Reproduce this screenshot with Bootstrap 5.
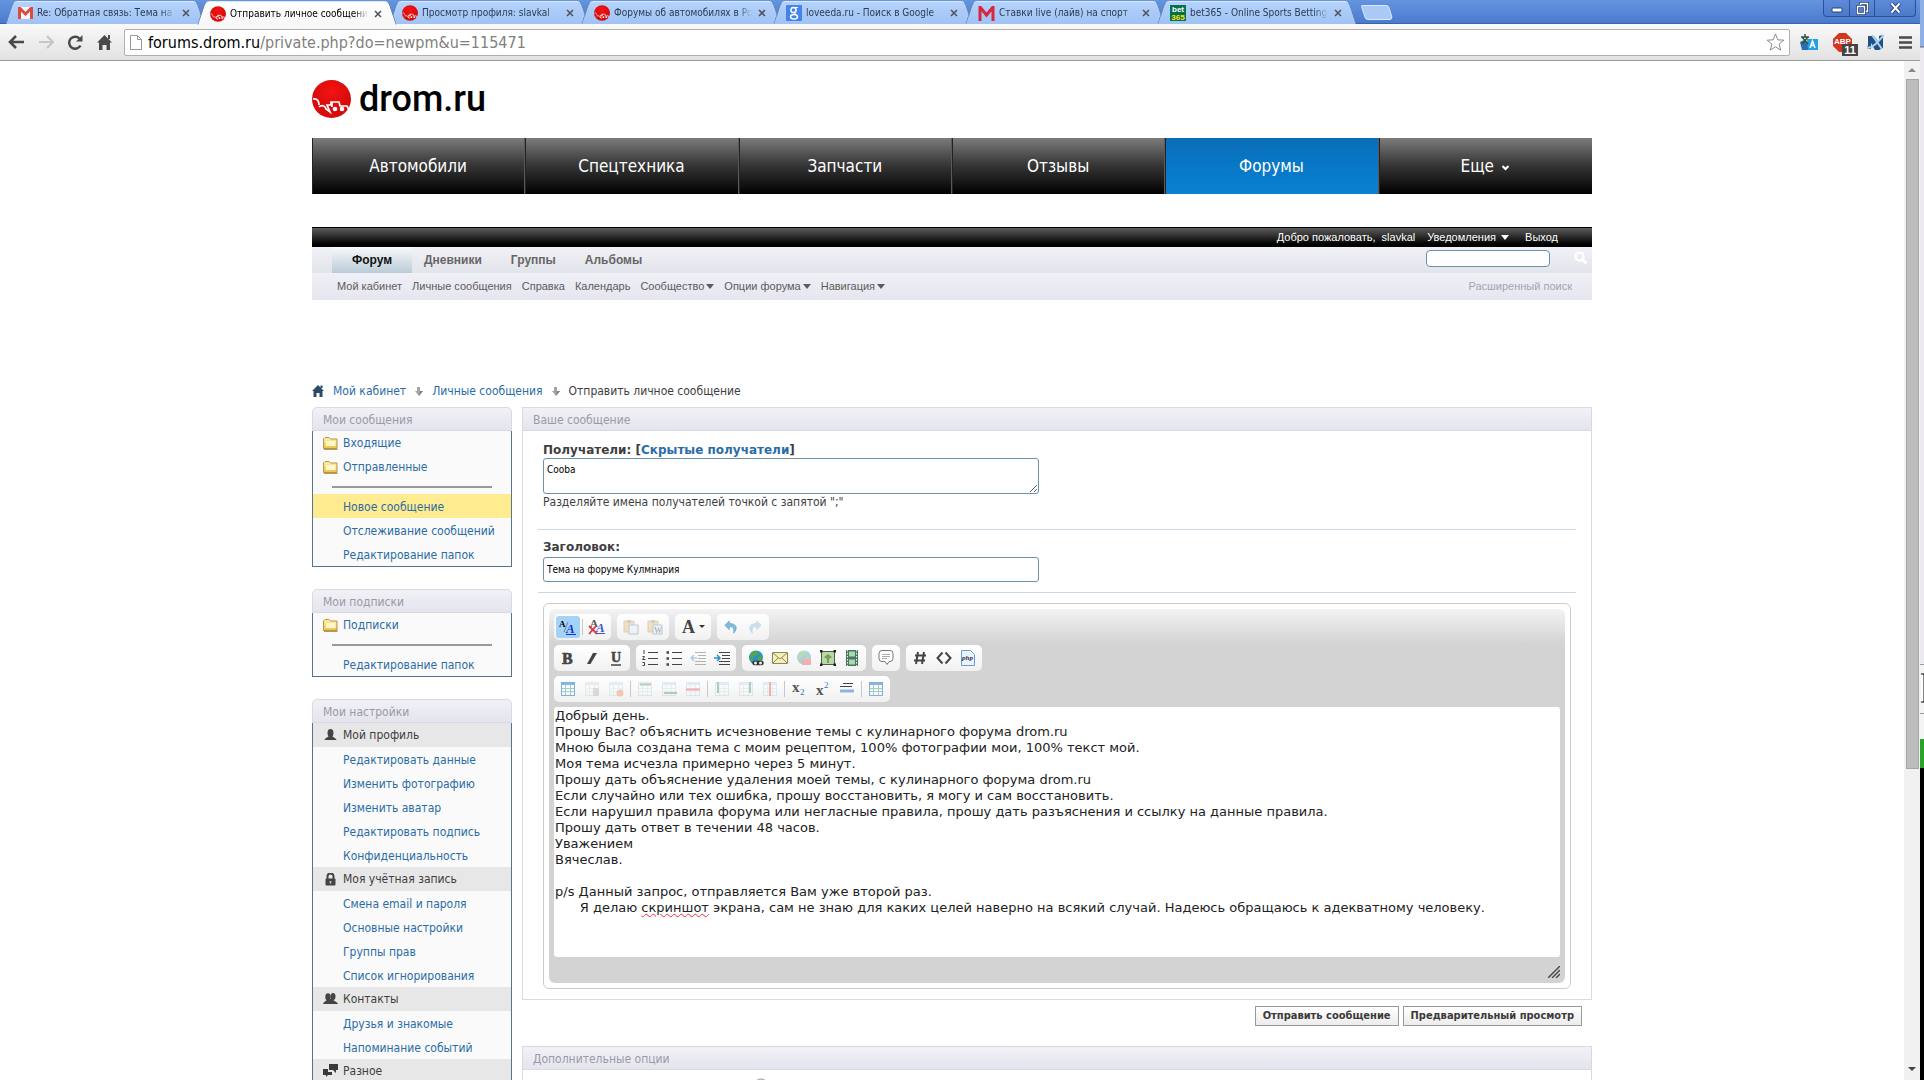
<!DOCTYPE html>
<html lang="ru">
<head>
<meta charset="utf-8">
<meta name="viewport" content="width=device-width, initial-scale=1">
<title>Отправить личное сообщение</title>
<link href="https://cdn.jsdelivr.net/npm/bootstrap@5.3.0/dist/css/bootstrap.min.css" rel="stylesheet">
<style>
:root{--tahoma:"DejaVu Sans Condensed","DejaVu Sans",sans-serif;--verdana:"DejaVu Sans",sans-serif;--arial:"Liberation Sans",sans-serif}
body{font:12px/16px var(--tahoma);color:#3e3e3e;background:#fff}
a{color:#2a6ca6;text-decoration:none}
button{border:0;background:none;padding:0;color:inherit}
svg{display:block;flex:none}
/* browser frame */
.tabstrip{height:24px;padding-left:9px;background:linear-gradient(#6595df,#4a7ace);border-bottom:1px solid #3d63a5}
.btab{position:relative;isolation:isolate;width:192px;height:24px;padding:2px 11px 0 9px;color:#2c3a52;font-size:10px}
.btab::before,.btab::after{content:"";position:absolute;z-index:-1;top:1px;bottom:0;width:60%;background:linear-gradient(#b4d2fb,#9fc3f4);border-top:1px solid #dbe9fd}
.btab::before{left:0;transform:skewX(-18deg);border-left:1px solid #6283b8;border-top-left-radius:5px}
.btab::after{right:0;transform:skewX(18deg);border-right:1px solid #6283b8;border-top-right-radius:5px}
.btab.is-open{z-index:2;height:25px;color:#000}
.btab.is-open::before,.btab.is-open::after{background:linear-gradient(#fff,#f7f7f7)}
.btab a{color:inherit;width:138px;overflow:hidden;white-space:nowrap;-webkit-mask-image:linear-gradient(90deg,#000 90%,transparent);mask-image:linear-gradient(90deg,#000 90%,transparent)}
.newtab{width:28px;height:15px;margin:5px 0 0 10px;background:#abc9f5;border:1px solid #dbe9fd;border-radius:2px 3px 4px 3px;transform:skewX(18deg)}
.winbtns{height:17px;margin-right:4px;border:1px solid #2d4f93;border-top:0;border-radius:0 0 4px 4px;background:linear-gradient(#5d8bd9,#4c79c9)}
.winbtns button{width:25px;height:16px;display:grid;place-items:center}
.winbtns button+button{border-left:1px solid #2d4f93}
.winbtns button:last-child{width:41px}
.toolbar{height:37px;padding:0 8px;background:linear-gradient(#f9f9f9,#e2e2e2);border-bottom:1px solid #9b9b9b}
.navbtns{gap:14px}
.urlbox{height:27px;margin:0 6px 0 12px;padding:0 4px 0 5px;border:1px solid #b3aea8;border-radius:2px;background:#fff}
.urlbox svg:first-child{margin-right:6px}
.urlbox span{font-size:16px;line-height:24px;padding-top:2px;color:#808080}
.urlbox b{font-weight:400;color:#000}
.ext{gap:15px}
.counter{left:9px;top:11px;width:16px;height:12px;font:bold 11px/12px var(--arial);background:#444;color:#fff;text-align:center}
.scroller{width:16px;background:#f1f1f1}
.thumb{width:13px;height:690px;background:#bcbcbc;border:1px solid #a6a6a6}
.behind{width:4px;background:#eceaf0}
/* page */
.wrap{width:1280px;max-width:100%}
.brand{height:61px;padding-top:3px;gap:8px;color:#000;font:500 36px/38px Roboto,sans-serif}
.mainnav{height:56px;background:linear-gradient(#7c7c7c,#3a3a3a 45%,#000)}
.mainnav a{color:#fff;font-size:17px;line-height:24px;border-right:1px solid #5a5a5a;box-shadow:inset 1px 0 #222}
.mainnav a:last-child{border-color:transparent}
.mainnav a.is-open{background:linear-gradient(#0b6db4,#0874c2 30%,#0a80d3)}
.userbar{height:20px;margin-top:33px;padding-right:34px;border-top:1px solid #000;background:linear-gradient(#5c5c5c,#000 85%);font:11px/19px var(--arial);gap:12px}
.userbar a,.userbar span{color:#fff}
.fnav{height:26px;padding-left:20px;background:linear-gradient(#f1f2f7,#e2e4eb);font:bold 12px/26px var(--arial)}
.fnav a{color:#666}
.fnav .is-open{width:80px;color:#111;text-align:center;background:linear-gradient(#f8fafb,#b9cbd6)}
.fnav input{width:124px;height:17px;border:1px solid #6b91ab;border-radius:4px;background:#fff}
.fnav-rest{gap:29px}
.fsub{height:27px;padding:0 20px 0 25px;background:linear-gradient(#f0f1f7,#e4e5ee);font:11px/27px var(--arial);gap:10px}
.fsub a{color:#5c5c5c}
.fsub .adv{color:#a3a3b3}
.caret::after{content:"";display:inline-block;margin-left:2px;vertical-align:1px;border:4px solid transparent;border-top:5px solid;border-bottom:0}
.crumbs{margin:83px 0 8px;gap:9px}
.side{width:200px}
.boxhead{height:24px;padding-left:10px;margin:0;border:1px solid #d9d9e4;background:linear-gradient(#f1f1f6,#e4e4ee);color:#9a9aa6;font-size:12px;font-weight:400;line-height:24px}
.side .boxhead{border-radius:5px 5px 0 0}
.side ul{margin:0 0 22px;padding:0;list-style:none;background:#fafafa;border:1px solid #54748f;border-top:0}
.side li{height:24px;padding:0 10px;gap:5px;line-height:24px;display:flex;align-items:center;white-space:nowrap}
.side li.plain{padding:2px 0 0 30px}
.side li.is-open{background:#ffeb90}
.side li.group{background:#e7e7e7}
.side li.rule{height:15px;padding:0 19px}
.side li.rule hr{width:100%;height:2px;margin:0;border:0;background:#999;opacity:1}
.col-main{margin-left:10px;min-width:0}
.sheet{border:1px solid #d9d9e4;border-top:0;padding:11px 15px 10px}
.sheet label{display:block;font:bold 12px/16px var(--verdana)}
.fieldset{padding:0 5px 19px;border-bottom:1px solid #c9d8e2}
.fieldset+.fieldset{padding:9px 5px 10px}
.fieldset textarea,.fieldset input{display:block;width:496px;max-width:100%;border:1px solid #6b91ab;border-radius:3px;padding:0 3px;font:10px/16px var(--tahoma);color:#000}
.fieldset textarea{height:36px;padding-top:3px}
.fieldset input{height:25px;margin-top:2px}
.editor{margin:10px 5px 0;padding:5px;border:1px solid #ccc;border-radius:6px}
.editor-in{padding:5px 5px 0;border-radius:6px;background:linear-gradient(#f3f3f3,#d3d3d3 35px)}
.tools{gap:6px;margin-bottom:5px}
.grp{display:flex;align-items:center;height:26px;padding:2px;border-radius:5px;background:linear-gradient(#fff,#f1f1f1)}
.grp button{width:24px;height:22px;display:grid;place-items:center}
.grp button.wide{width:32px}
.grp button.is-open{background:#a3d3f8;border-radius:3px}
.grp i{width:1px;height:16px;margin:0 2px;background:#c8c8c8}
.dim{opacity:.38}
.ink{height:250px;padding:1px;background:#fff;border-radius:3px;font:13px/16px var(--verdana);color:#222;white-space:pre-wrap}
.ink u{text-decoration:underline wavy #e33 1px;text-underline-offset:1px}
.foot{height:26px;padding:9px 0}
.actions{padding:6px 10px 20px;gap:4px}
.actions button{height:20px;padding:0 7px;border:1px solid #999;background:linear-gradient(#fff,#ececec);font:bold 11px/18px var(--tahoma);color:#3a3a3a}
svg text{font-family:"Liberation Serif",serif}
</style>
</head>
<body class="vh-100 overflow-hidden d-flex">
<svg width="0" height="0" class="position-absolute" aria-hidden="true"><defs>
<linearGradient id="gold" x2="0" y2="1"><stop stop-color="#fff3b0"/><stop offset="1" stop-color="#ecc243"/></linearGradient>
<radialGradient id="red" cx=".5" cy=".3"><stop stop-color="#f31313"/><stop offset="1" stop-color="#d80b0b"/></radialGradient>
<symbol id="folder" viewBox="0 0 15 13"><path d="M.5 11.500V2L2 .5h4L7.500 2h6.500v9.500z" fill="url(#gold)" stroke="#b99649"/><path d="M3 4h9.500v5H3z" fill="#fff6c9"/><path d="M1 12.300h13.500" stroke="#a5803a"/></symbol>
<symbol id="drom" viewBox="0 0 39 38"><ellipse cx="19.500" cy="19" rx="19.500" ry="19" fill="url(#red)"/><path d="M1 19c4-1 6 2 6 6m0 2c2-2 6-2 7 2l4 3-3-7 4 0V22h8l1 4h7l2 4M20 22v5" fill="none" stroke="#fff" stroke-width="1.700"/><circle cx="23" cy="29" r="2.300" fill="#fff"/><circle cx="30" cy="29" r="2.300" fill="#fff"/></symbol>
<symbol id="x" viewBox="0 0 8 8"><path d="M1 1l6 6M7 1L1 7" stroke="#4d5566" stroke-width="1.600"/></symbol>
<symbol id="crumb" viewBox="0 0 8 9"><path d="M2 0h3v4h3L4 9 0 4h2z" fill="#a5a5a5"/><path d="M5 4h3L4 9z" fill="#808080"/></symbol>
<symbol id="tbl" viewBox="0 0 16 16"><rect x="1.500" y="1.500" width="13" height="13" fill="#f4faff" stroke="#7fb0dc"/><path d="M2 3h12" stroke="#8ab6e0" stroke-width="2"/><path d="M2 7.500h12M2 10.500h12M5.500 4v10M10.500 4v10" stroke="#a9cdb6"/></symbol>
<symbol id="undo" viewBox="0 0 16 16"><path d="M6 1L1 6l5 5V8c4-1 6 1 5 7 5-5 4-11-5-11z" fill="#7fb9dc" stroke="#5a9cc4" stroke-width=".7"/></symbol>
<symbol id="paste" viewBox="0 0 16 16"><path d="M1 2h10v11H1z" fill="#e2b86c" stroke="#b98b43"/><path d="M4 1h4v3H4z" fill="#888"/><path d="M6 6h9v9H6z" fill="#dff0fa" stroke="#679"/></symbol>
<symbol id="lines" viewBox="0 0 16 16"><path d="M5 2.500h11M8 5.500h8M8 8.500h8M5 11.500h11M5 14.500h11" stroke="#444"/></symbol>
<symbol id="globe" viewBox="0 0 16 16"><circle cx="8" cy="7.500" r="7" fill="#2f8fc4"/><path d="M4 2c3-2 6-1 7 1-2 1-2 3-4 3S4 9 5 12C1 10 1 5 4 2zM10 7l4-1c0 4-2 6-4 7z" fill="#4fa94a"/></symbol>
</defs></svg>

<div class="d-flex flex-column flex-grow-1 overflow-hidden">
<header>
 <nav class="tabstrip d-flex" aria-label="Вкладки">
  <div class="btab d-flex align-items-center"><svg width="15" height="12" viewBox="0 0 15 12" class="me-1"><path d="M0 0h15v12H0z" fill="#f6f6f6"/><path d="M1.500 12V1l6 6 6-6v11" fill="none" stroke="#dc4b3e" stroke-width="3"/></svg><a href="#">Re: Обратная связь: Тема на</a><button class="ms-auto" aria-label="Закрыть"><svg width="8" height="8"><use href="#x"/></svg></button></div>
  <div class="btab is-open d-flex align-items-center"><svg width="16" height="16" class="me-1"><use href="#drom"/></svg><a href="#">Отправить личное сообщение</a><button class="ms-auto" aria-label="Закрыть"><svg width="8" height="8"><use href="#x"/></svg></button></div>
  <div class="btab d-flex align-items-center"><svg width="16" height="16" class="me-1"><use href="#drom"/></svg><a href="#">Просмотр профиля: slavkal</a><button class="ms-auto" aria-label="Закрыть"><svg width="8" height="8"><use href="#x"/></svg></button></div>
  <div class="btab d-flex align-items-center"><svg width="16" height="16" class="me-1"><use href="#drom"/></svg><a href="#">Форумы об автомобилях в России</a><button class="ms-auto" aria-label="Закрыть"><svg width="8" height="8"><use href="#x"/></svg></button></div>
  <div class="btab d-flex align-items-center"><svg width="16" height="16" viewBox="0 0 16 16" class="me-1"><rect width="16" height="16" rx="1" fill="#4583ec"/><circle cx="7.500" cy="5" r="2.600" fill="none" stroke="#fff" stroke-width="1.500"/><ellipse cx="8" cy="11.800" rx="3.500" ry="2.300" fill="none" stroke="#fff" stroke-width="1.500"/><path d="M8 2.500h4M8 7.500l2 2" stroke="#fff"/></svg><a href="#">loveeda.ru - Поиск в Google</a><button class="ms-auto" aria-label="Закрыть"><svg width="8" height="8"><use href="#x"/></svg></button></div>
  <div class="btab d-flex align-items-center"><svg width="17" height="15" viewBox="0 0 17 15" class="me-1"><path d="M2 15V1l6.500 8L15 1v14" fill="none" stroke="#d7263d" stroke-width="3"/></svg><a href="#">Ставки live (лайв) на спорт</a><button class="ms-auto" aria-label="Закрыть"><svg width="8" height="8"><use href="#x"/></svg></button></div>
  <div class="btab d-flex align-items-center"><svg width="16" height="16" viewBox="0 0 16 16" class="me-1"><rect width="16" height="16" fill="#03704e"/><text x="8" y="7" text-anchor="middle" font-size="8" font-weight="700" fill="#fff" style="font-family:Liberation Sans">bet</text><text x="8" y="15" text-anchor="middle" font-size="8" font-weight="700" fill="#ffe600" style="font-family:Liberation Sans">365</text></svg><a href="#">bet365 - Online Sports Betting</a><button class="ms-auto" aria-label="Закрыть"><svg width="8" height="8"><use href="#x"/></svg></button></div>
  <button class="newtab" aria-label="Новая вкладка"></button>
  <div class="winbtns d-flex ms-auto">
   <button aria-label="Свернуть"><svg width="12" height="10"><rect x="1" y="5" width="10" height="4" rx="1" fill="#fff" stroke="#24407c"/></svg></button>
   <button aria-label="Восстановить"><svg width="13" height="13" viewBox="0 0 13 13" fill="none"><path d="M4.500 3V1.500h7v8H10M1.500 4.500h7v7h-7z" stroke="#24407c" stroke-width="3"/><path d="M4.500 3V1.500h7v8H10M1.500 4.500h7v7h-7z" stroke="#fff" stroke-width="1.400"/></svg></button>
   <button aria-label="Закрыть окно"><svg width="13" height="12" viewBox="0 0 13 12"><path d="M2.500 1.500l8 9M10.500 1.500l-8 9" stroke="#24407c" stroke-width="4"/><path d="M2.500 1.500l8 9M10.500 1.500l-8 9" stroke="#fff" stroke-width="2"/></svg></button>
  </div>
 </nav>
 <div class="toolbar d-flex align-items-center">
  <div class="navbtns d-flex align-items-center flex-shrink-0">
  <button aria-label="Назад"><svg width="17" height="14" viewBox="0 0 17 14"><path d="M8 1L2 7l6 6M2.500 7H16" fill="none" stroke="#4a4a4a" stroke-width="2.600"/></svg></button>
  <button aria-label="Вперёд"><svg width="15" height="14" viewBox="0 0 15 14"><path d="M8 1l6 6-6 6M13 7H0" fill="none" stroke="#c6c6c6" stroke-width="2.200"/></svg></button>
  <button aria-label="Обновить"><svg width="15" height="15" viewBox="0 0 15 15"><path d="M12.500 10.500A6 6 0 1 1 11.500 3.500" fill="none" stroke="#4a4a4a" stroke-width="2.400"/><path d="M14.500 0v6.500H8z" fill="#4a4a4a"/></svg></button>
  <button aria-label="Домой"><svg width="15" height="15" viewBox="0 0 15 15"><path d="M7.500 0L15 7.500h-2V15H9.500v-5h-4v5H2V7.500H0zM11 0h2v4h-2z" fill="#4a4a4a"/></svg></button>
  </div>
  <div class="urlbox d-flex align-items-center flex-grow-1"><svg width="12" height="15" viewBox="0 0 12 15"><path d="M.5.5h7l4 4v10H.5zM7.500.5v4h4" fill="#fff" stroke="#999"/></svg><span><b>forums.drom.ru</b>/private.php?do=newpm&amp;u=115471</span>
   <svg class="ms-auto" width="19" height="18" viewBox="0 0 19 18"><path d="M9.500 1l2.300 5.800 6 .4-4.700 3.900 1.600 6-5.200-3.300-5.200 3.300 1.600-6L1.200 7.200l6-.4z" fill="#fff" stroke="#8a8a8a"/></svg></div>
  <div class="ext d-flex align-items-center ps-1">
   <svg width="18" height="17" viewBox="0 0 18 17"><path d="M0 8l4-2 6 4-2 6H2z" fill="#2a6fb4"/><path d="M7 5h11v11H8z" fill="#23a0e6"/><path d="M1 3h8M5 0v3M2 3l6 7M8 3L2 10" stroke="#30543a" stroke-width="1.500"/><path d="M10 14l2.500-7L15 14M11 11.500h3" stroke="#fff" stroke-width="1.500" fill="none"/></svg>
   <span class="position-relative"><svg width="19" height="19" viewBox="0 0 19 19"><path d="M6 0h7l6 6v7l-6 6H6l-6-6V6z" fill="#d3351f"/><text x="9.500" y="11" text-anchor="middle" font-size="8" font-weight="700" fill="#fff" style="font-family:Liberation Sans">ABP</text></svg><span class="counter position-absolute">11</span></span>
   <svg width="17" height="17" viewBox="0 0 17 17"><path d="M1 2h6l5 7V2l4-1v13l-4 2H8L4 9v6H0l1-4z" fill="#234f86"/><path d="M5 1l10 14M0 14c6 0 11-6 17-13" stroke="#a8d4ef" stroke-width="2" fill="none"/></svg>
   <svg width="13" height="13"><path d="M0 1.500h13M0 6.500h13M0 11.500h13" stroke="#4a4a4a" stroke-width="2.600"/></svg>
  </div>
 </div>
</header>

<div class="d-flex flex-grow-1 overflow-hidden">
<div class="flex-grow-1 overflow-hidden">
<div class="wrap mx-auto">
 <div class="pt-3"><a href="#" class="brand d-flex"><svg width="39" height="38"><use href="#drom"/></svg>drom.ru</a></div>
 <nav class="mainnav nav nav-justified flex-nowrap">
  <a class="nav-item d-grid align-content-center" href="#">Автомобили</a><a class="nav-item d-grid align-content-center" href="#">Спецтехника</a><a class="nav-item d-grid align-content-center" href="#">Запчасти</a><a class="nav-item d-grid align-content-center" href="#">Отзывы</a><a class="nav-item d-grid align-content-center is-open" href="#">Форумы</a><a class="nav-item d-flex align-items-center justify-content-center" href="#">Еще<svg class="ms-2 mt-1" width="7" height="6" viewBox="0 0 7 6"><path d="M.5 1l3 3 3-3" stroke="#fff" stroke-width="2" fill="none"/></svg></a>
 </nav>
 <div class="userbar d-flex justify-content-end"><span>Добро пожаловать,&nbsp; <a href="#">slavkal</a></span><a href="#" class="caret">Уведомления </a><a href="#" class="ms-1">Выход</a></div>
 <nav class="fnav d-flex"><a class="is-open" href="#">Форум</a>
  <div class="fnav-rest d-flex ps-2 ms-1"><a href="#">Дневники</a><a href="#">Группы</a><a href="#">Альбомы</a></div>
  <form class="d-flex ms-auto align-items-center pe-1 pb-1"><input type="search" aria-label="Поиск"><button type="button" aria-label="Найти" class="ms-4"><svg width="14" height="14" viewBox="0 0 14 14"><circle cx="5.500" cy="5.500" r="4" fill="none" stroke="#fff" stroke-width="2.400"/><path d="M8.500 8.500l4 4" stroke="#fff" stroke-width="3"/></svg></button></form>
 </nav>
 <nav class="fsub d-flex"><a href="#">Мой кабинет</a><a href="#">Личные сообщения</a><a href="#">Справка</a><a href="#">Календарь</a><a href="#" class="caret">Сообщество</a><a href="#" class="caret">Опции форума</a><a href="#" class="caret">Навигация</a><a href="#" class="adv ms-auto">Расширенный поиск</a></nav>

 <div class="crumbs d-flex align-items-center"><svg width="12" height="12" viewBox="0 0 12 12"><path d="M6 0l6 6h-1.500v6h-3V8h-3v4h-3V6H0zM8.500.5h2V3h-2z" fill="#2d4a66"/></svg><a href="#">Мой кабинет</a><svg width="8" height="9"><use href="#crumb"/></svg><a href="#">Личные сообщения</a><svg width="8" height="9"><use href="#crumb"/></svg><span>Отправить личное сообщение</span></div>

 <div class="d-flex">
  <aside class="side flex-shrink-0">
   <h2 class="boxhead">Мои сообщения</h2>
   <ul><li><svg width="15" height="13"><use href="#folder"/></svg><a href="#">Входящие</a></li><li><svg width="15" height="13"><use href="#folder"/></svg><a href="#">Отправленные</a></li><li class="rule"><hr></li><li class="plain is-open"><a href="#">Новое сообщение</a></li><li class="plain"><a href="#">Отслеживание сообщений</a></li><li class="plain"><a href="#">Редактирование папок</a></li></ul>
   <h2 class="boxhead">Мои подписки</h2>
   <ul><li><svg width="15" height="13"><use href="#folder"/></svg><a href="#">Подписки</a></li><li class="rule"><hr></li><li class="plain"><a href="#">Редактирование папок</a></li></ul>
   <h2 class="boxhead">Мои настройки</h2>
   <ul>
    <li class="group"><svg width="15" height="12" viewBox="0 0 15 12"><ellipse cx="7.500" cy="4" rx="3" ry="4" fill="#444"/><path d="M1.500 11c1-3 4-2 4.500-5h3c.5 3 3.500 2 4.500 5z" fill="#444"/></svg>Мой профиль</li>
    <li class="plain"><a href="#">Редактировать данные</a></li><li class="plain"><a href="#">Изменить фотографию</a></li><li class="plain"><a href="#">Изменить аватар</a></li><li class="plain"><a href="#">Редактировать подпись</a></li><li class="plain"><a href="#">Конфиденциальность</a></li>
    <li class="group"><svg width="15" height="13" viewBox="0 0 15 13"><path d="M4.500 6V3.500a3 3 0 0 1 6 0V6" fill="none" stroke="#444" stroke-width="2"/><rect x="2.500" y="5.500" width="10" height="7" rx="1" fill="#444"/><path d="M7.500 8v2.500" stroke="#ccc" stroke-width="1.500"/></svg>Моя учётная запись</li>
    <li class="plain"><a href="#">Смена email и пароля</a></li><li class="plain"><a href="#">Основные настройки</a></li><li class="plain"><a href="#">Группы прав</a></li><li class="plain"><a href="#">Список игнорирования</a></li>
    <li class="group"><svg width="15" height="12" viewBox="0 0 15 12"><g fill="#444"><ellipse cx="5" cy="4" rx="2.700" ry="3.700"/><ellipse cx="10" cy="3.500" rx="2.500" ry="3.500"/><path d="M0 11c1-3 3-2 4-5h6c1 3 4 2 5 5z"/></g></svg>Контакты</li>
    <li class="plain"><a href="#">Друзья и знакомые</a></li><li class="plain"><a href="#">Напоминание событий</a></li>
    <li class="group"><svg width="15" height="14" viewBox="0 0 15 14"><path d="M6 0h9v6h-2v3l-3-3H6zM0 5h5v3h4v3H5l-2 2v-2H0z" fill="#3a3a3a"/></svg>Разное</li>
   </ul>
  </aside>

  <main class="col-main flex-grow-1">
   <h2 class="boxhead">Ваше сообщение</h2>
   <div class="sheet">
    <div class="fieldset"><label for="to">Получатели: [<a href="#">Скрытые получатели</a>]</label>
     <textarea id="to">Cooba</textarea><div>Разделяйте имена получателей точкой с запятой ";"</div></div>
    <div class="fieldset"><label for="subj">Заголовок:</label><input id="subj" type="text" value="Тема на форуме Кулмнария"></div>
    <div class="editor"><div class="editor-in">
     <div class="tools d-flex">
      <div class="grp"><button class="is-open"><svg width="18" height="16" viewBox="0 0 18 16"><text x="0" y="8" font-size="9" font-weight="700">A</text><text x="7" y="14" font-size="13" font-weight="700" font-style="italic" fill="#1533d6">A</text><path d="M5 13l4-10" stroke="#58a"/><path d="M7 15.500h10" stroke="#1533d6"/></svg></button><i></i><button><svg width="18" height="16" viewBox="0 0 18 16"><text x="2" y="8" font-size="11" font-weight="700" fill="#555">A</text><text x="8" y="13" font-size="13" font-weight="700" font-style="italic" fill="#4455c8">A</text><path d="M1 7l8 8M8 7l-7 8" stroke="#dc3b45" stroke-width="1.800"/><path d="M8 14.500h9" stroke="#4455c8"/></svg></button></div>
      <div class="grp"><button class="dim"><svg width="16" height="16"><use href="#paste"/></svg></button><button class="dim"><svg width="16" height="16" viewBox="0 0 16 16"><use href="#paste"/><text x="7" y="14" font-size="8" font-weight="700" fill="#357">W</text></svg></button></div>
      <div class="grp"><button class="wide"><svg width="26" height="16" viewBox="0 0 26 16"><text x="2" y="14" font-size="18" font-weight="700" fill="#444">A</text><path d="M19 6h6l-3 3z" fill="#333"/></svg></button></div>
      <div class="grp"><button><svg width="14" height="14"><use href="#undo"/></svg></button><button class="dim"><svg width="14" height="14" viewBox="0 0 16 16"><g transform="matrix(-1 0 0 1 16 0)"><use href="#undo"/></g></svg></button></div>
     </div>
     <div class="tools d-flex">
      <div class="grp"><button><svg width="16" height="16"><text x="2" y="14" font-size="16" font-weight="700" fill="#444" stroke="#444" stroke-width=".6">B</text></svg></button><button><svg width="16" height="16"><path d="M9 3h4L6.500 14H3z" fill="#444"/></svg></button><button><svg width="16" height="16"><text x="3" y="12" font-size="14" font-weight="700" fill="#444" stroke="#444" stroke-width=".5">U</text><path d="M3 15h10" stroke="#444" stroke-width="1.500"/></svg></button></div>
      <div class="grp"><button><svg width="16" height="16"><path d="M6 2.500h10M6 8.500h10M6 14.500h10" stroke="#444"/><path d="M2 0v4M0.500 6.500h2l-2 3h3M.5 12.500h2v3h-2" stroke="#444" fill="none"/></svg></button><button><svg width="16" height="16"><path d="M6 2.500h10M6 8.500h10M6 14.500h10" stroke="#444"/><path d="M.5 2.500h2.500M.5 8.500h2.500M.5 14.500h2.500" stroke="#444" stroke-width="2.500"/></svg></button><button class="dim"><svg width="16" height="16"><use href="#lines"/><path d="M7 8H1m3-3L1 8l3 3" stroke="#2b8fc9" stroke-width="1.500" fill="none"/></svg></button><button><svg width="16" height="16"><use href="#lines"/><path d="M0 8h5M3 5l3 3-3 3" stroke="#2b8fc9" stroke-width="1.500" fill="none"/></svg></button></div>
      <div class="grp"><button><svg width="16" height="16" viewBox="0 0 16 16"><use href="#globe"/><path d="M6.500 13h7" stroke="#333" stroke-width="4.500" stroke-linecap="round"/><circle cx="7.500" cy="13" r="1.500" fill="#eee"/><circle cx="12.500" cy="13" r="1.500" fill="#eee"/></svg></button><button><svg width="16" height="14"><path d="M.5 1.500h15v11H.5z" fill="#f3efbb" stroke="#8c8a55"/><path d="M1 2l7 6 7-6M1 12l5-5M15 12l-5-5" stroke="#8c8a55" fill="none"/></svg></button><button class="dim"><svg width="16" height="16" viewBox="0 0 16 16"><use href="#globe"/><path d="M6 9h9v6H6z" fill="#e0453c"/></svg></button><button><svg width="16" height="16"><path d="M1.500 1.500h13v13h-13z" fill="#b4dba0" stroke="#555"/><path d="M7 13V9L4 7l4-3 4 3-3 2v4z" fill="#7e9a5c"/><path d="M0 0h2.500v2.500H0zM13.500 0H16v2.500h-2.500zM0 13.500h2.500V16H0zM13.500 13.500H16V16h-2.500z" fill="#222"/></svg></button><button><svg width="14" height="16"><path d="M1 0h12v16H1z" fill="#4e7263"/><path d="M4 1.500h6v5H4zM4 9.500h6v5H4z" fill="#a3dcae"/><path d="M2.500 0v16M11.500 0v16" stroke="#dfe" stroke-dasharray="1.500"/></svg></button></div>
      <div class="grp"><button><svg width="16" height="16"><path d="M4 .5h8a3 3 0 0 1 3 3v5a3 3 0 0 1-3 3h-1l-2 3-2-3H4a3 3 0 0 1-3-3v-5a3 3 0 0 1 3-3z" fill="#fff" stroke="#777"/><path d="M4 4.500h8M4 6.500h8M4 8.500h5" stroke="#aaa"/></svg></button></div>
      <div class="grp"><button><svg width="14" height="14"><path d="M5 1L3 13M11 1L9 13M2 4.500h11M1 9.500h11" stroke="#444" stroke-width="2"/></svg></button><button><svg width="16" height="14"><path d="M6.500 1.500L1.500 7l5 5.500M9.500 1.500l5 5.500-5 5.500" fill="none" stroke="#444" stroke-width="2"/></svg></button><button><svg width="16" height="16"><path d="M1.500.5h9l4 4v11h-13z" fill="#eaf3fc" stroke="#6b9bd1"/><text x="2" y="10" font-size="7" font-weight="700" font-style="italic" fill="#334">php</text></svg></button></div>
     </div>
     <div class="tools d-flex">
      <div class="grp"><button><svg width="16" height="16"><use href="#tbl"/></svg></button><button class="dim"><svg width="16" height="16"><use href="#tbl" opacity=".5"/><path d="M9 7h6v8H9z" fill="#aaa"/></svg></button><button class="dim"><svg width="16" height="16"><use href="#tbl" opacity=".5"/><circle cx="12" cy="12" r="3.500" fill="#e8804c"/></svg></button><i></i><button class="dim"><svg width="16" height="16"><use href="#tbl" opacity=".6"/><path d="M3 3.500h11" stroke="#486" stroke-width="2"/></svg></button><button class="dim"><svg width="16" height="16"><use href="#tbl" opacity=".6"/><path d="M3 12h13" stroke="#385" stroke-width="2"/></svg></button><button class="dim"><svg width="16" height="16"><use href="#tbl" opacity=".6"/><path d="M1 8.500h14" stroke="#e33" stroke-width="2"/></svg></button><i></i><button class="dim"><svg width="16" height="16"><use href="#tbl" opacity=".6"/><path d="M4 1v11" stroke="#385" stroke-width="2"/></svg></button><button class="dim"><svg width="16" height="16"><use href="#tbl" opacity=".6"/><path d="M12 1v11" stroke="#385" stroke-width="2"/></svg></button><button class="dim"><svg width="16" height="16"><use href="#tbl" opacity=".6"/><path d="M8 1v14" stroke="#e33" stroke-width="2"/></svg></button><i></i><button><svg width="16" height="16"><text x="1" y="11" font-size="15" font-weight="700" fill="#555">x</text><text x="9" y="14" font-size="9" fill="#37b">2</text></svg></button><button><svg width="16" height="16"><text x="1" y="14" font-size="15" font-weight="700" fill="#555">x</text><text x="9" y="7" font-size="9" fill="#37b">2</text></svg></button><button><svg width="16" height="14"><path d="M4 1.500h10M1 4.500h12" stroke="#444"/><path d="M1 9h14" stroke="#8db4e0" stroke-width="3"/></svg></button><i></i><button><svg width="16" height="16"><use href="#tbl"/></svg></button></div>
     </div>
     <div class="ink" contenteditable="true" role="textbox" aria-multiline="true" aria-label="Сообщение" spellcheck="false">Добрый день.
Прошу Вас? объяснить исчезновение темы с кулинарного форума drom.ru
Мною была создана тема с моим рецептом, 100% фотографии мои, 100% текст мой.
Моя тема исчезла примерно через 5 минут.
Прошу дать объяснение удаления моей темы, с кулинарного форума drom.ru
Если случайно или тех ошибка, прошу восстановить, я могу и сам восстановить.
Если нарушил правила форума или негласные правила, прошу дать разъяснения и ссылку на данные правила.
Прошу дать ответ в течении 48 часов.
Уважением
Вячеслав.

p/s Данный запрос, отправляется Вам уже второй раз.
      Я делаю <u>скриншот</u> экрана, сам не знаю для каких целей наверно на всякий случай. Надеюсь обращаюсь к адекватному человеку.</div>
     <div class="foot d-flex justify-content-end"><svg width="12" height="12"><path d="M0 12L12 0M4 12l8-8M8 12l4-4" stroke="#444" stroke-width="1.400"/></svg></div>
    </div></div>
   </div>
   <div class="actions d-flex justify-content-end"><button type="submit">Отправить сообщение</button><button type="button">Предварительный просмотр</button></div>
   <h2 class="boxhead">Дополнительные опции</h2>
   <div class="sheet pt-2"><svg width="466" height="16"><circle cx="223" cy="8" r="7" fill="#eee" stroke="#999"/></svg></div>
  </main>
 </div>
</div>
</div>
<div class="scroller d-flex flex-column align-items-center flex-shrink-0 pb-2"><svg width="8" height="18" viewBox="0 0 8 18"><path d="M0 11h8L4 7z" fill="#888"/></svg><div class="thumb"></div><svg class="mt-auto" width="8" height="5"><path d="M0 0h8L4 4z" fill="#444"/></svg></div>
</div>
</div>
<svg class="behind h-100" width="4" height="1080" viewBox="0 0 4 1080" preserveAspectRatio="xMinYMin slice"><path d="M0 0h4v47H0z" fill="#8fb0e4"/><path d="M0 47h4" stroke="#667"/><path d="M0 663h4v76H0z" fill="#f4f4f4"/><path d="M0 664.500h4M0 713.500h4" stroke="#99a"/><path d="M1 674h3v28H1" fill="#fff" stroke="#000"/><path d="M0 739h4v29H0z" fill="#2aa32a"/><path d="M0 768h4v312H0z"/></svg>
<script src="https://cdn.jsdelivr.net/npm/bootstrap@5.3.0/dist/js/bootstrap.bundle.min.js"></script>
</body>
</html>
